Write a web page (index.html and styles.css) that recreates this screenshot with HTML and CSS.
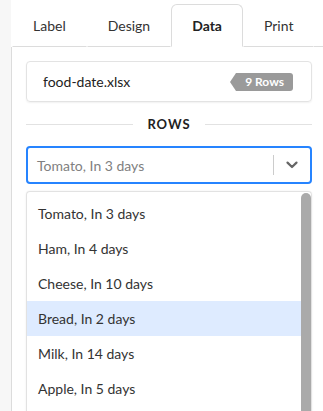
FILE: index.html
```html
<!DOCTYPE html>
<html>
<head>
<meta charset="utf-8">
<link rel="stylesheet" href="styles.css">
</head>
<body>
<div class="app">
  <div class="tabs">
    <div class="tab">Label</div>
    <div class="tab">Design</div>
    <div class="tab active">Data</div>
    <div class="tab">Print</div>
    <div class="tab-fill"></div>
  </div>
  <div class="panel">
    <div class="file-card">
      <span class="file-name">food-date.xlsx</span>
      <span class="badge">9 Rows</span>
    </div>
    <div class="section-title"><span>ROWS</span></div>
    <div class="select">
      <span class="placeholder">Tomato, In 3 days</span>
      <span class="sep"></span>
      <svg class="chevron" width="14" height="14" viewBox="0 0 14 14"><path d="M2.5 4.6 L7 9 L11.5 4.6" fill="none" stroke="#666" stroke-width="2.2" stroke-linecap="round" stroke-linejoin="round"/></svg>
    </div>
    <div class="menu">
      <ul class="options">
        <li>Tomato, In 3 days</li>
        <li>Ham, In 4 days</li>
        <li>Cheese, In 10 days</li>
        <li class="focused">Bread, In 2 days</li>
        <li>Milk, In 14 days</li>
        <li>Apple, In 5 days</li>
      </ul>
      <div class="scrollbar"><div class="thumb"></div></div>
    </div>
  </div>
</div>
</body>
</html>
```
FILE: styles.css
```css
html, body {
  margin: 0;
  padding: 0;
}
body {
  background: #f7f7f7;
  font-family: Lato, "Open Sans", sans-serif;
  color: #333;
  height: 411px;
  overflow: hidden;
}
.app {
  margin-left: 11px;
  background: #fff;
  height: 411px;
}
.tabs {
  display: flex;
  align-items: flex-end;
  height: 47px;
}
.tab {
  box-sizing: border-box;
  height: 43px;
  padding: 0 20px;
  display: flex;
  align-items: center;
  padding-bottom: 1px;
  font-size: 14px;
  color: #333;
  border: 1px solid transparent;
  border-bottom: 1px solid #dcdcdc;
}
.tab:first-child {
  margin-left: 1px;
}
.tab.active {
  border: 1px solid #dcdcdc;
  border-bottom-color: #fff;
  border-radius: 6px 6px 0 0;
  font-weight: 700;
  color: #222;
}
.tab-fill {
  flex: 1;
  border-bottom: 1px solid #dcdcdc;
}
.panel {
  border-left: 1px solid #dcdcdc;
  padding: 14px 11px 0 14px;
  width: 286px;
  height: 364px;
}
.file-card {
  box-sizing: border-box;
  height: 41px;
  border: 1px solid #e3e3e3;
  border-radius: 4px;
  box-shadow: 0 1px 2px rgba(0,0,0,0.06);
  display: flex;
  align-items: center;
  justify-content: space-between;
  padding: 0 18px 0 16px;
}
.file-name {
  font-size: 14px;
  color: #222;
}
.badge {
  position: relative;
  background: #9a9a9a;
  color: #fff;
  font-size: 12px;
  font-weight: 700;
  height: 18px;
  line-height: 18px;
  padding: 0 9px 0 9px;
  border-radius: 0 3px 3px 0;
  margin-top: 1px;
}
.badge::before {
  content: "";
  position: absolute;
  left: -6px;
  top: 0;
  border-style: solid;
  border-width: 9px 6px 9px 0;
  border-color: transparent #9a9a9a transparent transparent;
}
.section-title {
  display: flex;
  align-items: center;
  gap: 14px;
  height: 44px;
  font-size: 13px;
  font-weight: 700;
  letter-spacing: 1px;
  color: #222;
}
.section-title::before,
.section-title::after {
  content: "";
  flex: 1;
  height: 1px;
  background: #e2e2e2;
}
.select {
  box-sizing: border-box;
  height: 38px;
  border: 2px solid #2684ff;
  border-radius: 4px;
  display: flex;
  align-items: center;
  padding-left: 9px;
}
.placeholder {
  flex: 1;
  font-size: 14px;
  color: #808080;
}
.sep {
  width: 1px;
  height: 20px;
  background: #cccccc;
}
.chevron {
  margin: 0 11px;
}
.menu {
  margin-top: 7px;
  border: 1px solid #e2e2e2;
  border-bottom: none;
  border-radius: 4px 4px 0 0;
  box-shadow: 0 0 2px rgba(0,0,0,0.08);
  display: flex;
  height: 220px;
}
.options {
  list-style: none;
  margin: 0;
  padding: 4px 0 0 0;
  flex: 1;
}
.options li {
  height: 35px;
  display: flex;
  align-items: center;
  padding-left: 11px;
  font-size: 14px;
  color: #333;
}
.options li.focused {
  background: #deebff;
}
.scrollbar {
  width: 10px;
  padding-top: 1px;
}
.thumb {
  background: #aaaaaa;
  height: 100%;
  border-radius: 5px 5px 0 0;
}
```
